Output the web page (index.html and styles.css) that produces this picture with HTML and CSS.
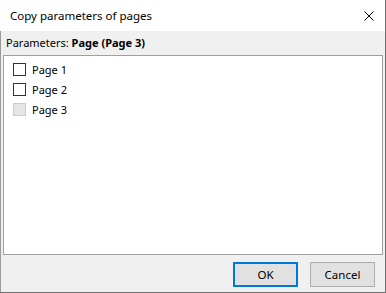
FILE: index.html
```html
<!DOCTYPE html>
<html lang="en">
<head>
  <meta charset="UTF-8">
  <title>Copy parameters of pages</title>
  <link rel="stylesheet" href="styles.css">
</head>
<body>
  <div class="dialog">
    <div class="titlebar">
      <span class="title">Copy parameters of pages</span>
      <span class="close">
        <svg width="10" height="10" viewBox="0 0 10 10">
          <path d="M0.5 0.5 L9.5 9.5 M9.5 0.5 L0.5 9.5" stroke="#000" stroke-width="1" fill="none"/>
        </svg>
      </span>
    </div>
    <div class="content">
      <div class="params">Parameters: <b>Page (Page 3)</b></div>
      <div class="list">
        <div class="item"><span class="check"></span>Page 1</div>
        <div class="item"><span class="check"></span>Page 2</div>
        <div class="item"><span class="check disabled"></span>Page 3</div>
      </div>
      <div class="buttons">
        <button class="btn default">OK</button>
        <button class="btn">Cancel</button>
      </div>
    </div>
  </div>
</body>
</html>
```

FILE: styles.css
```css
body {
  margin: 0;
  padding: 0;
  font-family: "Noto Sans", "Open Sans", sans-serif;
  font-size: 11px;
  color: #000;
  background-color: #fff;
}

.dialog {
  width: 386px;
  height: 293px;
  box-sizing: border-box;
  display: flex;
  flex-direction: column;
  border-right: 1px solid #707070;
  border-bottom: 1px solid #707070;
}

.titlebar {
  height: 31px;
  display: flex;
  align-items: center;
  justify-content: space-between;
  background-color: #fff;
  padding: 0 11px 0 10px;
}

.title {
  font-size: 11.5px;
}

.close {
  display: flex;
}

.content {
  flex: 1;
  background-color: #f0f0f0;
  border-left: 1px solid #9a9a9a;
  display: flex;
  flex-direction: column;
  padding: 0 2px 0 2px;
}

.params {
  height: 24px;
  line-height: 24px;
  padding-left: 3px;
}

.list {
  height: 200px;
  box-sizing: border-box;
  background-color: #fff;
  border: 1px solid #a0a0a0;
  padding: 3px 0 0 9px;
}

.item {
  height: 20px;
  display: flex;
  align-items: center;
}

.check {
  width: 13px;
  height: 13px;
  box-sizing: border-box;
  border: 1px solid #333;
  background-color: #fff;
  margin-right: 6px;
}

.check.disabled {
  border-color: #cccccc;
  background-color: #e6e6e6;
}

.buttons {
  display: flex;
  justify-content: flex-end;
  gap: 12px;
  padding: 7px 8px 0 0;
}

.btn {
  width: 65px;
  height: 25px;
  font-family: "Noto Sans", "Open Sans", sans-serif;
  font-size: 11.5px;
  background-color: #e1e1e1;
  border: 1px solid #adadad;
  padding: 0;
  color: #000;
}

.btn.default {
  border: 2px solid #0078d7;
}
```
